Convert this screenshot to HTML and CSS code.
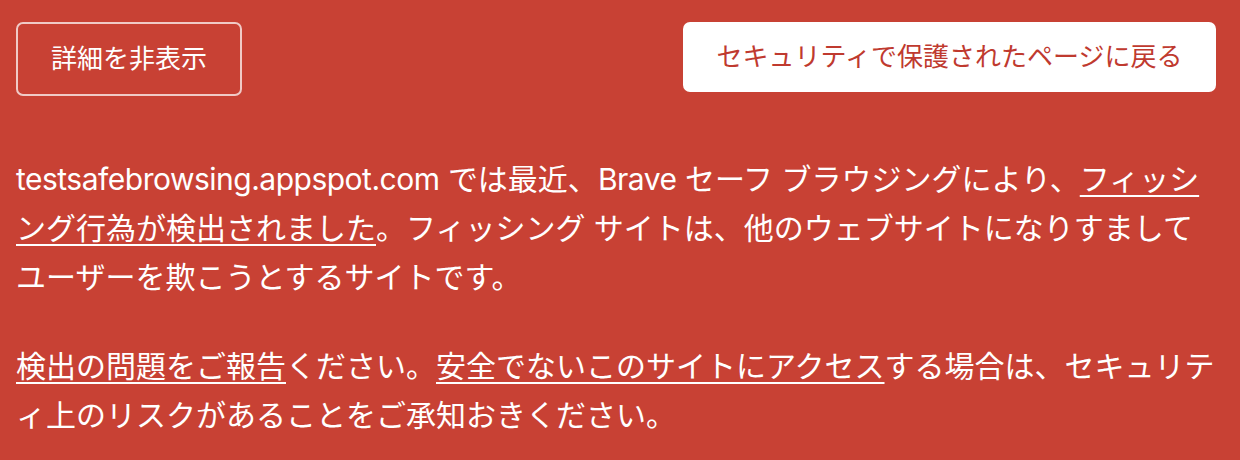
FILE: index.html
```html
<!DOCTYPE html>
<html lang="ja">
<head>
<meta charset="utf-8">
<title>セキュリティ警告</title>
<link rel="stylesheet" href="styles.css">
</head>
<body>
<main class="page">
  <div class="actions">
    <button class="btn btn-secondary" type="button">詳細を非表示</button>
    <button class="btn btn-primary" type="button">セキュリティで保護されたページに戻る</button>
  </div>
  <div class="details">
    <p class="para"><span class="latin">testsafebrowsing.appspot.com</span> では最近、<span class="latin">Brave</span> セーフ ブラウジングにより、<a class="link" href="#">フィッシング行為が検出されました</a>。フィッシング サイトは、他のウェブサイトになりすましてユーザーを欺こうとするサイトです。</p>
    <p class="para"><a class="link" href="#">検出の問題をご報告</a>ください。<a class="link" href="#">安全でないこのサイトにアクセス</a>する場合は、セキュリティ上のリスクがあることをご承知おきください。</p>
  </div>
</main>
</body>
</html>
```
FILE: styles.css
```css
html, body {
  margin: 0;
  padding: 0;
  background: #c84134;
}

body {
  font-family: Inter, "Noto Sans CJK JP", sans-serif;
  color: #ffffff;
}

.page {
  width: 1200px;
  padding: 22px 24px 0 16px;
}

.actions {
  display: flex;
  justify-content: space-between;
  align-items: flex-start;
}

.btn {
  box-sizing: border-box;
  font-family: Inter, "Noto Sans CJK JP", sans-serif;
  font-size: 26px;
  line-height: 30px;
  border-radius: 7px;
  cursor: pointer;
  display: flex;
  align-items: center;
  justify-content: center;
  white-space: nowrap;
}

.btn-secondary {
  height: 74px;
  padding: 0 33px;
  background: transparent;
  color: #ffffff;
  border: 2px solid rgba(255, 255, 255, 0.72);
}

.btn-primary {
  height: 70px;
  padding: 0 33.5px;
  background: #ffffff;
  color: #bf3a2f;
  border: none;
}

.details {
  padding-top: 59px;
}

.para {
  margin: 0 0 40px 0;
  font-size: 30px;
  line-height: 49px;
}

.latin {
  letter-spacing: -0.5px;
}

.link {
  color: #ffffff;
  text-decoration: underline;
  text-decoration-thickness: 2px;
  text-underline-offset: 5px;
}
```
